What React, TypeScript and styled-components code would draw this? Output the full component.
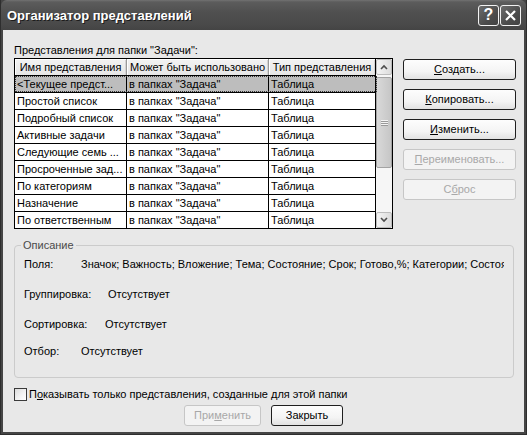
import styled, { createGlobalStyle } from 'styled-components';

const GlobalStyle = createGlobalStyle`
  html, body {
    margin: 0;
    padding: 0;
    background: #404040;
  }
  body {
    font-family: 'Liberation Sans', Arial, sans-serif;
    font-size: 11px;
    color: #000;
  }
`;

const VIEWS = [
  { name: '<Текущее предст...', where: 'в папках "Задача"', type: 'Таблица', selected: true },
  { name: 'Простой список', where: 'в папках "Задача"', type: 'Таблица' },
  { name: 'Подробный список', where: 'в папках "Задача"', type: 'Таблица' },
  { name: 'Активные задачи', where: 'в папках "Задача"', type: 'Таблица' },
  { name: 'Следующие семь ...', where: 'в папках "Задача"', type: 'Таблица' },
  { name: 'Просроченные зад...', where: 'в папках "Задача"', type: 'Таблица' },
  { name: 'По категориям', where: 'в папках "Задача"', type: 'Таблица' },
  { name: 'Назначение', where: 'в папках "Задача"', type: 'Таблица' },
  { name: 'По ответственным', where: 'в папках "Задача"', type: 'Таблица' },
];

const COLS = '112px 142px 107px';

// ========== Frame ==========
const Window = styled.div`
  width: 527px;
  height: 435px;
  display: flex;
  flex-direction: column;
  background: #454545;
  box-sizing: border-box;
  border: 1px solid #2e2e2e;
  border-top: none;
`;

const TitleBar = styled.div`
  height: 30px;
  flex-shrink: 0;
  display: flex;
  align-items: center;
  justify-content: space-between;
  padding: 0 5px 0 6px;
  background: linear-gradient(#727272 0, #5c5c5c 2px, #505050 40%, #4a4a4a 80%, #444 100%);
  border-radius: 6px 6px 0 0;
`;

const TitleText = styled.span`
  color: #fff;
  font-weight: bold;
  font-size: 13px;
  text-shadow: 1px 1px 0 #1c1c1c;
  padding-top: 1px;
`;

const CaptionButtons = styled.div`
  display: flex;
  gap: 1px;
`;

const CaptionButton = styled.div`
  width: 21px;
  height: 21px;
  box-sizing: border-box;
  border: 1px solid #f2f2f2;
  border-radius: 3px;
  background: linear-gradient(135deg, #6c6c6c, #4c4c4c 60%, #424242);
  display: flex;
  align-items: center;
  justify-content: center;
  color: #fff;
  font-weight: bold;
  font-size: 16px;
  line-height: 1;
`;

const Client = styled.div`
  flex: 1;
  margin: 0 2px 2px;
  background: #e8e8e8;
  padding: 14px 8px 0 11px;
  display: flex;
  flex-direction: column;
`;

// ========== Views list ==========
const ListLabel = styled.div`
  height: 14px;
  line-height: 13px;
`;

const TopRow = styled.div`
  display: flex;
  gap: 10px;
  align-items: flex-start;
`;

const ListBox = styled.div`
  width: 379px;
  height: 171px;
  box-sizing: border-box;
  border: 1px solid #000;
  background: #fff;
  display: flex;
`;

const Grid = styled.div`
  width: 361px;
  display: flex;
  flex-direction: column;
`;

const HeaderRow = styled.div`
  display: grid;
  grid-template-columns: ${COLS};
  height: 17px;
  box-sizing: border-box;
  border-bottom: 1px solid #000;
`;

const HeaderCell = styled.div`
  background: linear-gradient(#f3f3f3, #e6e6e6);
  border-right: 1px solid #9a9a9a;
  box-shadow: inset 1px 1px 0 #fff, inset -1px 0 0 #d4d4d4;
  text-align: center;
  line-height: 16px;
  white-space: nowrap;
  overflow: hidden;

  &:last-child {
    border-right-color: #000;
  }
`;

const Row = styled.div<{ $selected?: boolean }>`
  position: relative;
  display: grid;
  grid-template-columns: ${COLS};
  height: 17px;
  box-sizing: border-box;
  border-bottom: 1px solid #000;
  background: ${({ $selected }) => ($selected ? '#bdbdbd' : '#fff')};

  &:last-child {
    border-bottom: none;
    height: 16px;
  }

  ${({ $selected }) =>
    $selected &&
    `&::after {
      content: '';
      position: absolute;
      inset: 0 -1px 0 0;
      border: 1px dotted #333;
      pointer-events: none;
    }`}
`;

const Cell = styled.div`
  border-right: 1px solid #000;
  padding-left: 2px;
  line-height: 16px;
  white-space: nowrap;
  overflow: hidden;
`;

const Scrollbar = styled.div`
  width: 16px;
  display: flex;
  flex-direction: column;
  background: #f6f6f6;
`;

const ScrollArrow = styled.div`
  height: 16px;
  flex-shrink: 0;
  box-sizing: border-box;
  border: 1px solid #bcbcbc;
  border-radius: 2px;
  background: linear-gradient(90deg, #f4f4f4, #dcdcdc);
  display: flex;
  align-items: center;
  justify-content: center;
`;

const Thumb = styled.div`
  margin-top: 2px;
  height: 91px;
  flex-shrink: 0;
  box-sizing: border-box;
  border: 1px solid #a3a3a3;
  border-radius: 2px;
  background: linear-gradient(90deg, #d9d9d9, #c6c6c6);
  display: flex;
  flex-direction: column;
  align-items: center;
  justify-content: center;
  gap: 1px;
`;

const Grip = styled.span`
  width: 7px;
  height: 1px;
  background: #f4f4f4;
  box-shadow: 0 1px 0 #9a9a9a;
`;

const Track = styled.div`
  flex: 1;
`;

// ========== Action buttons ==========
const ButtonColumn = styled.div`
  width: 113px;
  padding-top: 1px;
  display: flex;
  flex-direction: column;
  gap: 9px;
`;

const Button = styled.div<{ $disabled?: boolean; $width?: number }>`
  width: ${({ $width }) => ($width ? `${$width}px` : 'auto')};
  height: 21px;
  box-sizing: border-box;
  border: 1px solid ${({ $disabled }) => ($disabled ? '#c6c6c6' : '#1f1f1f')};
  border-radius: 3px;
  background: ${({ $disabled }) =>
    $disabled ? '#f3f3f3' : 'linear-gradient(#fdfdfd, #f4f4f4 60%, #e2e2e2)'};
  color: ${({ $disabled }) => ($disabled ? '#a8a8a8' : '#000')};
  display: flex;
  align-items: center;
  justify-content: center;
  line-height: 13px;
`;

// ========== Description ==========
const GroupBox = styled.div`
  position: relative;
  margin-top: 16px;
  width: 500px;
  height: 133px;
  box-sizing: border-box;
  border: 1px solid #cbcbcb;
  border-radius: 4px;
  padding: 12px 9px 0 9px;
`;

const GroupLegend = styled.span`
  position: absolute;
  top: -7px;
  left: 6px;
  padding: 0 2px;
  background: #e8e8e8;
  color: #4a4a4a;
  line-height: 13px;
`;

const DescRow = styled.div<{ $top: number }>`
  display: flex;
  line-height: 13px;
  margin-top: ${({ $top }) => $top}px;
`;

const DescLabel = styled.span<{ $w: number }>`
  width: ${({ $w }) => $w}px;
  flex-shrink: 0;
`;

const DescValue = styled.span`
  flex: 1;
  white-space: nowrap;
  overflow: hidden;
`;

// ========== Footer ==========
const CheckRow = styled.div`
  margin-top: 10px;
  display: flex;
  align-items: center;
  gap: 2px;
  line-height: 13px;
`;

const CheckBox = styled.span`
  width: 13px;
  height: 13px;
  box-sizing: border-box;
  border: 1px solid #3a3a3a;
  background: linear-gradient(135deg, #dcdcdc, #f4f4f4 60%, #fff);
`;

const FooterButtons = styled.div`
  margin-top: 4px;
  padding-right: 3px;
  display: flex;
  justify-content: center;
  gap: 10px;
`;

function Chevron({ up }: { up?: boolean }) {
  return (
    <svg width="8" height="6" viewBox="0 0 8 6">
      <path
        d={up ? 'M1 5 L4 2 L7 5' : 'M1 1 L4 4 L7 1'}
        fill="none"
        stroke="#4d4d4d"
        strokeWidth="1.6"
      />
    </svg>
  );
}

export default function App() {
  return (
    <>
      <GlobalStyle />
      <Window>
        <TitleBar>
          <TitleText>Организатор представлений</TitleText>
          <CaptionButtons>
            <CaptionButton>?</CaptionButton>
            <CaptionButton>
              <svg width="13" height="13" viewBox="0 0 13 13">
                <path d="M2 2 L11 11 M11 2 L2 11" stroke="#fff" strokeWidth="2.2" />
              </svg>
            </CaptionButton>
          </CaptionButtons>
        </TitleBar>

        <Client>
          <ListLabel>Представления для папки "Задачи":</ListLabel>
          <TopRow>
            <ListBox>
              <Grid>
                <HeaderRow>
                  <HeaderCell>Имя представления</HeaderCell>
                  <HeaderCell>Может быть использовано</HeaderCell>
                  <HeaderCell>Тип представления</HeaderCell>
                </HeaderRow>
                {VIEWS.map((v) => (
                  <Row key={v.name} $selected={v.selected}>
                    <Cell>{v.name}</Cell>
                    <Cell>{v.where}</Cell>
                    <Cell>{v.type}</Cell>
                  </Row>
                ))}
              </Grid>
              <Scrollbar>
                <ScrollArrow>
                  <Chevron up />
                </ScrollArrow>
                <Thumb>
                  <Grip />
                  <Grip />
                  <Grip />
                </Thumb>
                <Track />
                <ScrollArrow>
                  <Chevron />
                </ScrollArrow>
              </Scrollbar>
            </ListBox>

            <ButtonColumn>
              <Button>
                <span><u>С</u>оздать...</span>
              </Button>
              <Button>
                <span><u>К</u>опировать...</span>
              </Button>
              <Button>
                <span><u>И</u>зменить...</span>
              </Button>
              <Button $disabled>
                <span><u>П</u>ереименовать...</span>
              </Button>
              <Button $disabled>
                <span>С<u>б</u>рос</span>
              </Button>
            </ButtonColumn>
          </TopRow>

          <GroupBox>
            <GroupLegend>Описание</GroupLegend>
            <DescRow $top={0}>
              <DescLabel $w={57}>Поля:</DescLabel>
              <DescValue>
                Значок; Важность; Вложение; Тема; Состояние; Срок; Готово,%; Категории; Состояние задачи
              </DescValue>
            </DescRow>
            <DescRow $top={17}>
              <DescLabel $w={84}>Группировка:</DescLabel>
              <DescValue>Отсутствует</DescValue>
            </DescRow>
            <DescRow $top={17}>
              <DescLabel $w={81}>Сортировка:</DescLabel>
              <DescValue>Отсутствует</DescValue>
            </DescRow>
            <DescRow $top={14}>
              <DescLabel $w={57}>Отбор:</DescLabel>
              <DescValue>Отсутствует</DescValue>
            </DescRow>
          </GroupBox>

          <CheckRow>
            <CheckBox />
            <span>П<u>о</u>казывать только представления, созданные для этой папки</span>
          </CheckRow>

          <FooterButtons>
            <Button $disabled $width={77}>
              <span>При<u>м</u>енить</span>
            </Button>
            <Button $width={72}>
              <span>Закрыть</span>
            </Button>
          </FooterButtons>
        </Client>
      </Window>
    </>
  );
}
